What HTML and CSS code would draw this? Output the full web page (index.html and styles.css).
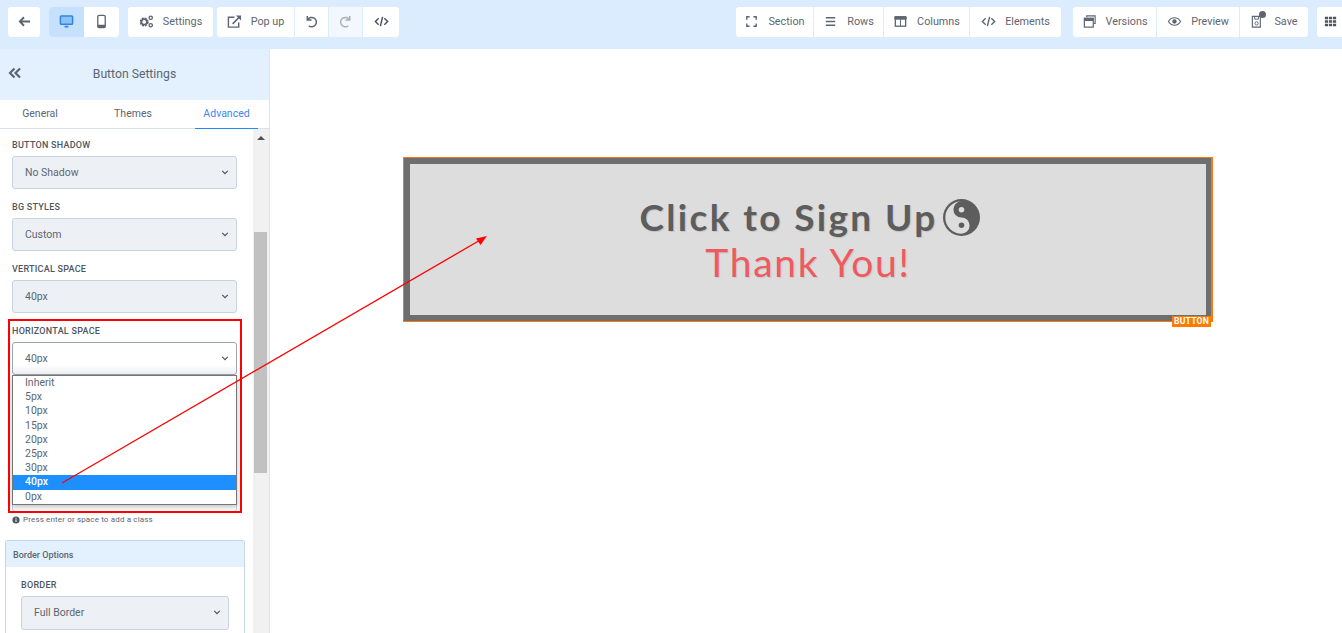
FILE: index.html
```html
<!DOCTYPE html>
<html lang="en">
<head>
<meta charset="utf-8">
<title>Button Settings</title>
<link rel="stylesheet" href="styles.css">
</head>
<body>
<header class="toolbar">
  <div class="tool-group">
    <button class="tool icon-only back"><svg viewBox="0 0 16 16" class="ic"><path d="M14 8H3M7.500 3.500 3 8l4.500 4.500" fill="none" stroke="#5d6670" stroke-width="2"/></svg></button>
  </div>
  <div class="tool-group">
    <button class="tool icon-only device active"><svg viewBox="0 0 16 16" class="ic"><rect x="1.500" y="2" width="13" height="9" rx="1" fill="none" stroke="#2f86e0" stroke-width="1.600"/><rect x="2" y="2.500" width="12" height="8" fill="#2f86e0" opacity=".35"/><path d="M6 13.500h4" stroke="#2f86e0" stroke-width="2"/></svg></button>
    <button class="tool icon-only device"><svg viewBox="0 0 16 16" class="ic"><rect x="4" y="1.500" width="8" height="13" rx="1.500" fill="none" stroke="#5d6670" stroke-width="1.400"/><path d="M4 11.500h8v3H4z" fill="#5d6670"/></svg></button>
  </div>
  <div class="tool-group">
    <button class="tool settings"><svg viewBox="0 0 16 16" class="ic"><circle cx="5.500" cy="8.500" r="3.600" fill="none" stroke="#5d6670" stroke-width="2.400" stroke-dasharray="2 .83"/><circle cx="5.500" cy="8.500" r="2.800" fill="none" stroke="#5d6670" stroke-width="1.600"/><circle cx="12.500" cy="4" r="1.800" fill="none" stroke="#5d6670" stroke-width="1.400"/><circle cx="12.500" cy="12" r="1.800" fill="none" stroke="#5d6670" stroke-width="1.400"/></svg>Settings</button>
  </div>
  <div class="tool-group tight">
    <button class="tool popup divided"><svg viewBox="0 0 16 16" class="ic"><path d="M12.500 9v5H1.500V3.500H8" fill="none" stroke="#5d6670" stroke-width="1.500"/><path d="M6 10.500 13 3.500" fill="none" stroke="#5d6670" stroke-width="1.700"/><path d="M9.500 1.500H15V7z" fill="#5d6670"/></svg>Pop up</button>
    <button class="tool icon-only undo divided"><svg viewBox="0 0 16 16" class="ic"><path d="M3.500 2v4.500H8M3.800 6.300A5 5 0 1 1 5 12.500" fill="none" stroke="#5d6670" stroke-width="1.600"/></svg></button>
    <button class="tool icon-only redo divided"><svg viewBox="0 0 16 16" class="ic"><path d="M12.500 2v4.500H8M12.200 6.300A5 5 0 1 0 11 12.500" fill="none" stroke="#a9b0b7" stroke-width="1.600"/></svg></button>
    <button class="tool icon-only code"><svg viewBox="0 0 16 16" class="ic"><path d="M5 4.500 1.500 8 5 11.500M11 4.500 14.500 8 11 11.500M9.200 3 6.800 13" fill="none" stroke="#4d5660" stroke-width="1.600"/></svg></button>
  </div>
  <div class="tool-spacer"></div>
  <div class="tool-group">
    <button class="tool section divided"><svg viewBox="0 0 16 16" class="ic"><path d="M3 6V3H6M10 3h3v3M13 10v3H10M6 13H3v-3" fill="none" stroke="#5d6670" stroke-width="1.500"/></svg>Section</button>
    <button class="tool rows divided"><svg viewBox="0 0 16 16" class="ic"><path d="M3 4h10M3 8h10M3 12h10" stroke="#5d6670" stroke-width="1.400"/></svg>Rows</button>
    <button class="tool columns divided"><svg viewBox="0 0 16 16" class="ic"><rect x="2.500" y="3" width="11" height="10" fill="none" stroke="#5d6670" stroke-width="1.400"/><path d="M2 3h12v2.500H2zM8 3v10" fill="#5d6670" stroke="#5d6670"/></svg>Columns</button>
    <button class="tool elements"><svg viewBox="0 0 16 16" class="ic"><path d="M5 4.500 1.500 8 5 11.500M11 4.500 14.500 8 11 11.500M9.200 3 6.800 13" fill="none" stroke="#5d6670" stroke-width="1.500"/></svg>Elements</button>
  </div>
  <div class="tool-group loose">
    <button class="tool versions divided"><svg viewBox="0 0 16 16" class="ic"><path d="M5 3.500V2h9v8h-1.500" fill="none" stroke="#5d6670" stroke-width="1.200"/><rect x="2.500" y="4.500" width="9.500" height="9.500" fill="none" stroke="#5d6670" stroke-width="1.300"/><path d="M2.500 4.500H12v3H2.500z" fill="#5d6670"/></svg>Versions</button>
    <button class="tool preview divided"><svg viewBox="0 0 16 16" class="ic"><path d="M1.500 8C3 5.500 5.200 4 8 4s5 1.500 6.500 4C13 10.500 10.800 12 8 12S3 10.500 1.500 8z" fill="none" stroke="#5d6670" stroke-width="1.200"/><circle cx="8" cy="8" r="2.300" fill="#5d6670"/></svg>Preview</button>
    <button class="tool save"><svg viewBox="0 0 16 16" class="ic"><path d="M2.500 2.500H11V14H2.500z" fill="none" stroke="#5d6670" stroke-width="1.200"/><path d="M5 2.500v3h4v-3" fill="none" stroke="#5d6670"/><circle cx="7" cy="10" r="1.700" fill="none" stroke="#5d6670"/></svg>Save<span class="save-dot"></span></button>
  </div>
  <div class="tool-group bleed">
    <button class="tool icon-only apps"><svg viewBox="0 0 16 16" class="ic"><path d="M2 3h3.400v2.700H2zM6.300 3h3.400v2.700H6.300zM10.600 3H14v2.700h-3.400zM2 6.700h3.400v2.700H2zM6.300 6.700h3.400v2.700H6.300zM10.600 6.700H14v2.700h-3.400zM2 10.400h3.400v2.700H2zM6.300 10.400h3.400v2.700H6.300zM10.600 10.400H14v2.700h-3.400z" fill="#4d5660"/></svg></button>
  </div>
</header>

<div class="workspace">
  <aside class="sidebar">
    <div class="side-head">
      <svg viewBox="0 0 14 12" class="chev"><path d="M6.500 1.500 2 6l4.500 4.500M12 1.500 7.500 6l4.500 4.500" fill="none" stroke="#5d6670" stroke-width="2.200"/></svg>
      <span class="side-title">Button Settings</span>
    </div>
    <nav class="tabs">
      <span class="tab tab-general">General</span>
      <span class="tab tab-themes">Themes</span>
      <span class="tab tab-advanced">Advanced</span>
    </nav>
    <div class="side-scroll">
      <div class="side-content">
        <div class="field"><label class="field-label">BUTTON SHADOW</label><div class="select">No Shadow<svg viewBox="0 0 10 6" class="caret"><path d="m1.500 1 3.500 3.500L8.500 1" fill="none" stroke="#4d5660" stroke-width="1.500"/></svg></div></div>
        <div class="field"><label class="field-label">BG STYLES</label><div class="select">Custom<svg viewBox="0 0 10 6" class="caret"><path d="m1.500 1 3.500 3.500L8.500 1" fill="none" stroke="#4d5660" stroke-width="1.500"/></svg></div></div>
        <div class="field"><label class="field-label">VERTICAL SPACE</label><div class="select">40px<svg viewBox="0 0 10 6" class="caret"><path d="m1.500 1 3.500 3.500L8.500 1" fill="none" stroke="#4d5660" stroke-width="1.500"/></svg></div></div>
        <div class="field open-field">
          <label class="field-label">HORIZONTAL SPACE</label>
          <div class="select open">40px<svg viewBox="0 0 10 6" class="caret"><path d="m1.500 1 3.500 3.500L8.500 1" fill="none" stroke="#4d5660" stroke-width="1.500"/></svg></div>
          <ul class="options">
            <li>Inherit</li><li>5px</li><li>10px</li><li>15px</li><li>20px</li><li>25px</li><li>30px</li><li class="chosen">40px</li><li>0px</li>
          </ul>
        </div>
        <div class="class-input"></div>
        <p class="hint"><svg viewBox="0 0 8 8" class="info"><circle cx="4" cy="4" r="3.600" fill="#4d5660"/><path d="M4 3.400v2.600M4 1.700v1" stroke="#fff" stroke-width="1"/></svg>Press enter or space to add a class</p>
        <section class="panel">
          <h3 class="panel-head">Border Options</h3>
          <div class="panel-body">
            <label class="field-label">BORDER</label>
            <div class="select">Full Border<svg viewBox="0 0 10 6" class="caret"><path d="m1.500 1 3.500 3.500L8.500 1" fill="none" stroke="#4d5660" stroke-width="1.500"/></svg></div>
          </div>
        </section>
      </div>
      <div class="scrollbar">
        <span class="arrow-up"></span>
        <span class="thumb"></span>
      </div>
    </div>
  </aside>
  <main class="canvas">
    <div class="cta-outline">
      <div class="cta">
        <div class="cta-main">Click to Sign Up<svg viewBox="0 0 24 24" class="yin"><circle cx="12" cy="12" r="12" fill="#5d5d5d"/><path d="M12 1.500A10.500 10.500 0 0 0 12 22.500 5.250 5.250 0 0 0 12 12 5.250 5.250 0 0 1 12 1.500z" fill="#ddd"/><circle cx="12" cy="7" r="1.800" fill="#ddd"/><circle cx="12" cy="17" r="1.800" fill="#5d5d5d"/></svg></div>
        <div class="cta-sub">Thank You!</div>
      </div>
      <span class="cta-badge">BUTTON</span>
    </div>
  </main>
</div>

<div class="annotation-box"></div>
<svg class="annotation-arrow" viewBox="0 0 1342 633"><path d="M62 483 482 239" stroke="#f00" stroke-width="1.300" fill="none"/><path d="M487 236 476 238.500 480.500 245z" fill="#f00"/></svg>
</body>
</html>
```
FILE: styles.css
```css
* { box-sizing: border-box; }
html, body { margin: 0; height: 100%; }
body {
  font-family: Roboto, "Liberation Sans", sans-serif;
  color: #5d6670;
  background: #fff;
  overflow: hidden;
  position: relative;
  height: 633px;
}
.toolbar {
  height: 49px;
  background: #dbecfe;
  display: flex;
  align-items: flex-start;
  padding: 7px 0 0 8px;
  gap: 9px;
  overflow: hidden;
}
.tool-group {
  display: flex;
  height: 30px;
  background: #fff;
  border-radius: 4px;
  overflow: hidden;
  flex: none;
}
.tool-group.tight { margin-left: -5px; }
.tool-group.loose { margin-left: 3px; }
.tool-group.bleed { margin-right: -15px; }
.tool-spacer { flex: 1; }
.tool {
  border: 0;
  background: #fff;
  font: 400 10.800px Roboto, sans-serif;
  color: #5d6670;
  height: 30px;
  padding: 0 0 2px;
  display: flex;
  align-items: center;
  justify-content: center;
  gap: 9px;
  position: relative;
  flex: none;
}
.divided { border-right: 1px solid #dbecfe; }
.ic { width: 15px; height: 15px; flex: none; }
.back { width: 32px; }
.device { width: 35px; }
.device.active { background: #c5e1fd; }
.settings { width: 85px; }
.popup { width: 78px; }
.undo { width: 34px; }
.redo { width: 34px; background: #f3f8fe; }
.code { width: 36px; }
.section { width: 78px; }
.rows { width: 70px; }
.columns { width: 86px; }
.elements { width: 91px; }
.versions { width: 84px; }
.preview { width: 83px; }
.save { width: 68px; }
.apps { width: 40px; justify-content: flex-start; padding-left: 6px; }
.save-dot {
  position: absolute;
  width: 7px;
  height: 7px;
  border-radius: 50%;
  background: #5d6670;
  left: 19px;
  top: 4px;
}
.workspace {
  display: flex;
  height: 584px;
}
.sidebar {
  width: 270px;
  flex: none;
  border-right: 1px solid #e2e5e8;
  display: flex;
  flex-direction: column;
  height: 100%;
}
.side-head {
  height: 51px;
  background: #e3f1fe;
  display: flex;
  align-items: center;
  justify-content: center;
  padding-bottom: 2px;
  position: relative;
  flex: none;
}
.chev {
  position: absolute;
  left: 8px;
  top: 18px;
  width: 14px;
  height: 12px;
}
.side-title { font-size: 12.200px; color: #5d6670; }
.tabs {
  height: 29px;
  display: flex;
  flex: none;
  border-bottom: 1px solid #dce1e6;
  background: #fff;
}
.tab {
  flex: none;
  font-size: 10.500px;
  line-height: 27px;
  text-align: center;
  color: #5d6670;
  height: 29px;
}
.tab-general { width: 80px; }
.tab-themes { width: 106px; }
.tab-advanced {
  width: 63px;
  margin-left: 9px;
  color: #3d86f2;
  border-bottom: 1px solid #1e8cf8;
}
.side-scroll {
  flex: 1;
  min-height: 0;
  display: flex;
  overflow: hidden;
}
.side-content {
  width: 253px;
  flex: none;
  padding: 11px 0 0 12px;
  overflow: hidden;
}
.field { width: 225px; height: 62px; position: relative; }
.field-label {
  display: block;
  font-size: 9px;
  font-weight: 500;
  letter-spacing: .25px;
  line-height: 11px;
  height: 12px;
  color: #4d5660;
  margin-bottom: 4px;
}
.select {
  height: 33px;
  background: #edf1f6;
  border: 1px solid #c8d3e0;
  border-radius: 3px;
  font-size: 10.500px;
  line-height: 31px;
  padding-left: 12px;
  color: #5d6670;
  position: relative;
}
.select.open {
  background: linear-gradient(#fff 70%, #eef0f2);
  border-color: #9aa5b1;
}
.caret {
  position: absolute;
  right: 7px;
  top: 13px;
  width: 8px;
  height: 5px;
}
.options {
  position: absolute;
  left: 0;
  top: 49px;
  width: 225px;
  height: 130px;
  margin: 0;
  padding: 0;
  list-style: none;
  background: #fff;
  border: 1px solid #767676;
  z-index: 5;
  box-shadow: 0 2px 5px rgba(0,0,0,.25);
}
.options li {
  font-size: 10.500px;
  height: 14.200px;
  line-height: 14px;
  padding-left: 12px;
  color: #5d6670;
}
.options li.chosen {
  background: #1e8fff;
  color: #fff;
  font-weight: 500;
}
.class-input {
  width: 225px;
  height: 108px;
  margin-top: 16px;
  border: 1px solid #c8d3e0;
  border-radius: 3px;
}
.hint {
  margin: 3px 0 0;
  font-size: 8px;
  line-height: 10px;
  height: 10px;
  display: flex;
  align-items: center;
  gap: 3px;
  color: #5d6670;
  letter-spacing: .15px;
}
.info { width: 8px; height: 8px; flex: none; }
.panel {
  width: 240px;
  margin: 15px 0 0 -7px;
  border: 1px solid #c5d6e8;
  border-radius: 2px;
  height: 120px;
}
.panel-head {
  margin: 0;
  height: 26px;
  line-height: 28px;
  background: #e3f1fe;
  font-size: 9px;
  font-weight: 500;
  padding-left: 7px;
  color: #5d6670;
}
.panel-body { padding: 13px 15px 0; }
.panel-body .field-label { margin-bottom: 4px; }
.panel-body .select { height: 34px; line-height: 31px; }
.scrollbar {
  width: 16px;
  flex: none;
  background: #f1f1f1;
  position: relative;
}
.arrow-up {
  position: absolute;
  left: 4px;
  top: 7px;
  border: 4px solid transparent;
  border-top: 0;
  border-bottom: 4px solid #505050;
}
.thumb {
  position: absolute;
  left: 1px;
  top: 103px;
  width: 13px;
  height: 241px;
  background: #c1c1c1;
}
.canvas {
  flex: 1;
  padding: 108px 0 0 133px;
  background: #fff;
}
.cta-outline {
  width: 810px;
  height: 165px;
  border: 1px solid #f57c14;
  border-right-width: 2px;
  position: relative;
}
.cta {
  width: 807px;
  height: 163px;
  background: #ddd;
  border: 6px solid #6e6e6e;
  border-right-width: 5px;
  display: flex;
  flex-direction: column;
  align-items: center;
  padding-top: 30px;
  font-family: Lato, sans-serif;
}
.cta-main {
  font-size: 37px;
  font-weight: 700;
  letter-spacing: 2.350px;
  line-height: 46px;
  color: #5d5d5d;
  text-shadow: 1px 1px 1px rgba(0,0,0,.12);
  display: flex;
  align-items: center;
  margin-left: 3px;
}
.yin { width: 37px; height: 37px; margin-left: 5px; }
.cta-sub {
  font-size: 39px;
  font-weight: 400;
  letter-spacing: 1.700px;
  line-height: 44px;
  color: #ee5a5f;
  text-shadow: 1px 1px 1px rgba(0,0,0,.1);
}
.cta-badge {
  position: absolute;
  right: 0;
  bottom: -6px;
  background: #ff7a00;
  color: #fff;
  font: 700 8.600px/11px Roboto, sans-serif;
  padding: 0 2px;
  letter-spacing: .2px;
}
.annotation-box {
  position: absolute;
  left: 8px;
  top: 319px;
  width: 234px;
  height: 194px;
  border: 2px solid #f00;
  z-index: 10;
}
.annotation-arrow {
  position: absolute;
  left: 0;
  top: 0;
  width: 1342px;
  height: 633px;
  z-index: 11;
  pointer-events: none;
}
```
